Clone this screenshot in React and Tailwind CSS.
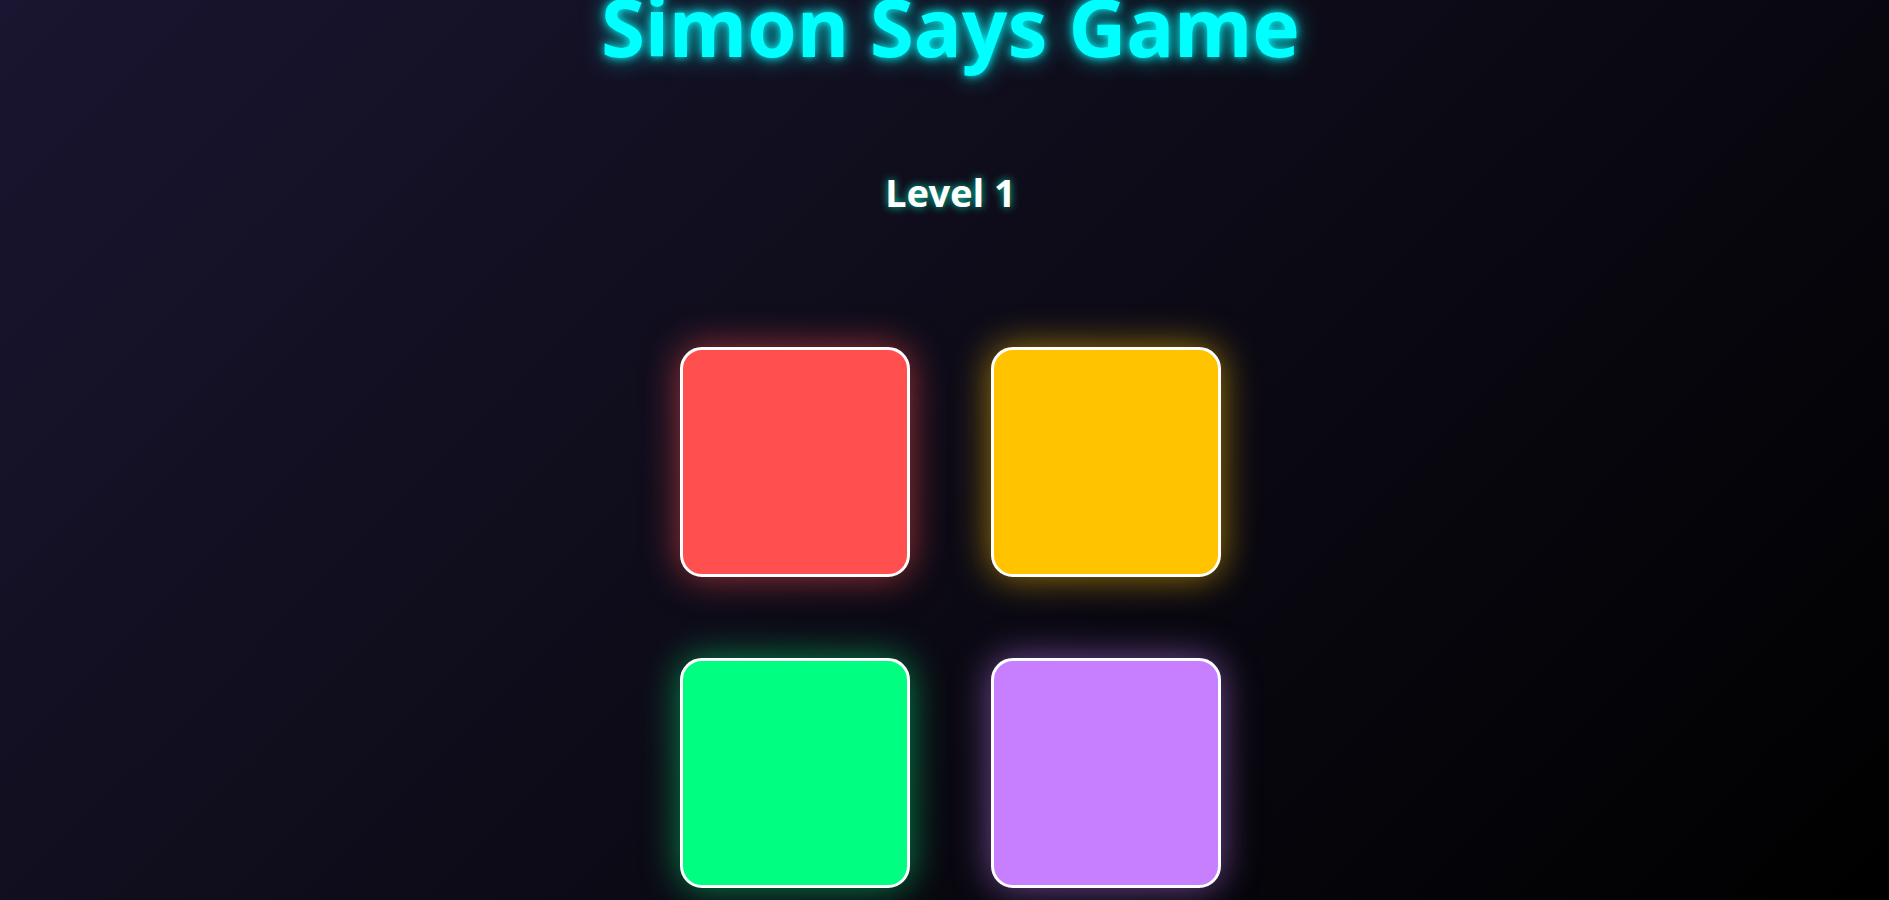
export default function App() {
  const pads = [
    { id: 'red', color: 'bg-[#ff4f4f]', glow: 'shadow-[0_0_36px_rgba(255,79,79,0.6)]' },
    { id: 'yellow', color: 'bg-[#ffc300]', glow: 'shadow-[0_0_36px_rgba(255,195,0,0.6)]' },
    { id: 'green', color: 'bg-[#00ff80]', glow: 'shadow-[0_0_36px_rgba(0,255,128,0.5)]' },
    { id: 'purple', color: 'bg-[#c77fff]', glow: 'shadow-[0_0_36px_rgba(199,127,255,0.55)]' },
  ];

  return (
    <div className="h-[900px] overflow-hidden bg-[linear-gradient(135deg,#1a1530_0%,#0d0b17_50%,#000000_100%)] font-['Noto_Sans',sans-serif]">
      <div className="flex flex-col items-center pl-[12px]">
        {/* Title */}
        <h1 className="mt-[-14px] text-[80px] leading-none font-bold text-[#00ffff] [text-shadow:0_0_10px_#00ffff,0_0_24px_rgba(0,255,255,0.6)]">
          Simon Says Game
        </h1>

        {/* Level */}
        <h2 className="mt-[107px] text-[38px] leading-none font-bold text-white [text-shadow:0_0_8px_rgba(0,255,200,0.8)]">
          Level 1
        </h2>

        {/* Pads */}
        <div className="mt-[136px] grid grid-cols-2 gap-[81px]">
          {pads.map(p => (
            <button
              key={p.id}
              className={`w-[230px] h-[230px] rounded-[22px] border-[3px] border-white ${p.color} ${p.glow}`}
            />
          ))}
        </div>
      </div>
    </div>
  );
}
